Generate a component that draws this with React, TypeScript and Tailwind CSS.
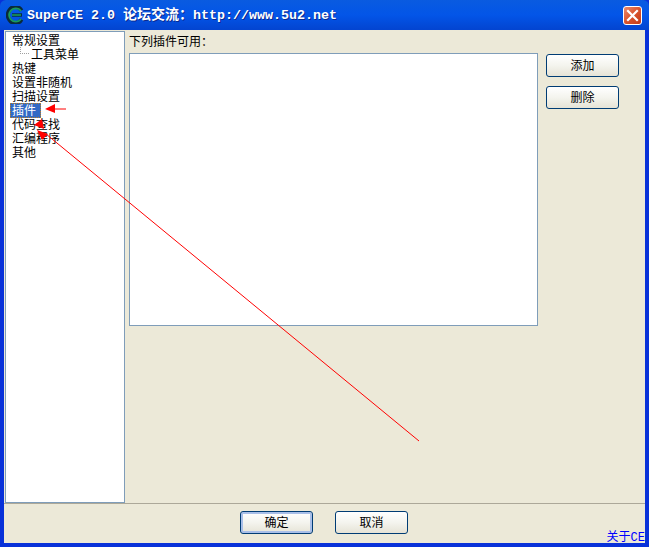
import React from 'react';

const cjk = "font-['Noto_Sans_CJK_SC','Liberation_Sans',sans-serif]";

const treeItems = [
  { label: '常规设置' },
  { label: '工具菜单', child: true },
  { label: '热键' },
  { label: '设置非随机' },
  { label: '扫描设置' },
  { label: '插件', selected: true },
  { label: '代码查找' },
  { label: '汇编程序' },
  { label: '其他' },
];

function XpButton({ label, isDefault }: { label: string; isDefault?: boolean }) {
  return (
    <button
      className={`w-[73px] h-[23px] pb-[2px] rounded-[3px] border border-[#003c74] bg-gradient-to-b from-white via-[#f4f4ee] to-[#e6e3d6] text-[12px] leading-none text-black ${
        isDefault ? 'shadow-[inset_0_0_0_2px_#a9bfe8]' : ''
      }`}
    >
      {label}
    </button>
  );
}

function TreeRow({ label, child, selected }: { label: string; child?: boolean; selected?: boolean }) {
  return (
    <div className={`relative h-[14px] flex items-center ${child ? 'pl-[25px]' : 'pl-[6px]'}`}>
      {child && (
        <span className="absolute left-[14px] top-[-3px] w-[9px] h-[10px] border-l border-b border-dotted border-[#a0a0a0]" />
      )}
      {selected ? (
        <span className="ml-[-2px] h-[15px] w-[31px] px-[2px] flex items-center bg-[#316ac5] text-white outline-1 outline-dotted outline-[#c08020] -outline-offset-1">
          {label}
        </span>
      ) : (
        <span>{label}</span>
      )}
    </div>
  );
}

export default function App() {
  return (
    <div className={`relative w-[649px] h-[547px] overflow-hidden flex flex-col bg-[#0831d9] ${cjk} text-[12px] text-black`}>
      {/* title bar */}
      <div className="h-[30px] shrink-0 flex items-center pl-[6px] pr-[7px] bg-gradient-to-b from-[#0a5be0] via-[#0355e8] to-[#0344d0] rounded-t-[6px]">
        <svg width="18" height="18" viewBox="0 0 18 18" className="shrink-0">
          <path d="M15.5 4.5A7 7 0 0 0 3.5 4 8 8 0 0 0 3.5 14 7 7 0 0 0 15.5 13.5" fill="none" stroke="#0a2a3a" strokeWidth="4" />
          <path d="M15 5A6.5 6.5 0 0 0 4.5 5 7 7 0 0 0 4.5 13 6.5 6.5 0 0 0 15 13" fill="none" stroke="#189a5c" strokeWidth="1.8" />
          <path d="M6 9h10" stroke="#0a2a3a" strokeWidth="3.4" />
          <path d="M6 9h9" stroke="#189a5c" strokeWidth="1.6" />
        </svg>
        <div className="ml-[3px] pt-[1px] text-white font-bold text-[13.33px] whitespace-pre font-['Liberation_Mono','Noto_Sans_CJK_SC',monospace] [text-shadow:1px_1px_0_#0a2a90]">
          SuperCE 2.0 <span className="text-[14px]">论坛交流：</span>http://www.5u2.net
        </div>
        <div className="ml-auto w-[19px] h-[19px] rounded-[3px] border border-white bg-gradient-to-br from-[#e98a6c] via-[#d9532c] to-[#c23a18] flex items-center justify-center">
          <svg width="13" height="13" viewBox="0 0 13 13">
            <path d="M2 2l9 9M11 2l-9 9" stroke="white" strokeWidth="2.2" strokeLinecap="square" />
          </svg>
        </div>
      </div>

      {/* client area */}
      <div className="flex-1 mx-[4px] mb-[4px] min-h-0 flex flex-col bg-[#ece9d8]">
        <div className="flex-1 min-h-0 flex border-b border-[#aca899] pl-[1px]">
          <div className="w-[120px] mt-[1px] pt-[1px] shrink-0 bg-white border border-[#7f9db9] leading-none">
            {treeItems.map((item) => (
              <TreeRow key={item.label} {...item} />
            ))}
          </div>
          <div className="flex-1 flex pl-[4px] pt-[4px]">
            <div className="w-[409px] flex flex-col">
              <div className="h-[19px] pb-[5px] flex items-center">下列插件可用：</div>
              <div className="w-[409px] h-[273px] bg-white border border-[#7f9db9]" />
            </div>
            <div className="ml-[8px] pt-[20px] flex flex-col gap-[9px]">
              <XpButton label="添加" />
              <XpButton label="删除" />
            </div>
          </div>
        </div>
        <div className="relative h-[39px] shrink-0 flex justify-center items-start pt-[7px] gap-[22px] pr-[1px]">
          <XpButton label="确定" isDefault />
          <XpButton label="取消" />
          <span className="absolute right-0 bottom-[-1px] text-[#0000ff] leading-none">
            关于<span className="font-['Liberation_Mono',monospace]">CE</span>
          </span>
        </div>
      </div>

      {/* red annotations drawn over the screenshot */}
      <svg className="absolute inset-0 pointer-events-none" width="649" height="547" viewBox="0 0 649 547">
        <path d="M52 109h14" stroke="#ff0000" strokeWidth="1" />
        <path d="M45 109l10-5v9z" fill="#ff0000" />
        <path d="M34 125l8-6 2 10z" fill="#ff0000" />
        <path d="M37 130l11 4-6 6z" fill="#ff0000" />
        <path d="M46 134l373 307" stroke="#ff0000" strokeWidth="1" />
      </svg>
    </div>
  );
}
